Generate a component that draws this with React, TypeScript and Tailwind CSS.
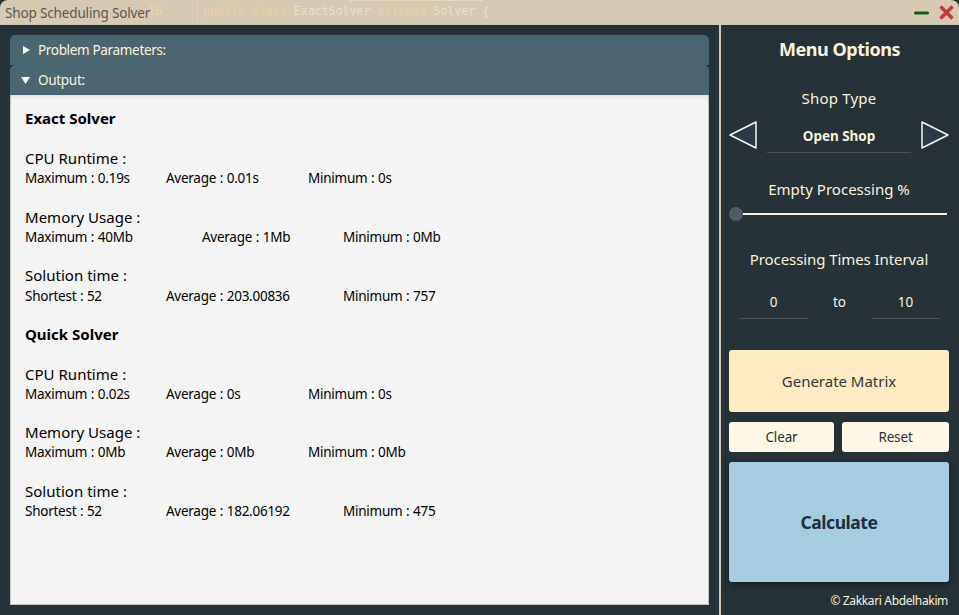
const data = [
  {
    name: 'Exact Solver',
    groups: [
      { title: 'CPU Runtime :', cells: ['Maximum : 0.19s', 'Average : 0.01s', 'Minimum : 0s'], cols: 'grid-cols-[141px_142px_1fr]', h: 'h-[59px]', gap: '' },
      { title: 'Memory Usage :', cells: ['Maximum : 40Mb', 'Average : 1Mb', 'Minimum : 0Mb'], cols: 'grid-cols-[177px_141px_1fr]', h: 'h-[58px]', gap: '' },
      { title: 'Solution time :', cells: ['Shortest : 52', 'Average : 203.00836', 'Minimum : 757'], cols: 'grid-cols-[141px_177px_1fr]', h: 'h-[59px]', gap: 'pt-px' },
    ],
  },
  {
    name: 'Quick Solver',
    groups: [
      { title: 'CPU Runtime :', cells: ['Maximum : 0.02s', 'Average : 0s', 'Minimum : 0s'], cols: 'grid-cols-[141px_142px_1fr]', h: 'h-[58px]', gap: '' },
      { title: 'Memory Usage :', cells: ['Maximum : 0Mb', 'Average : 0Mb', 'Minimum : 0Mb'], cols: 'grid-cols-[141px_142px_1fr]', h: 'h-[59px]', gap: '' },
      { title: 'Solution time :', cells: ['Shortest : 52', 'Average : 182.06192', 'Minimum : 475'], cols: 'grid-cols-[141px_177px_1fr]', h: 'h-[59px]', gap: '' },
    ],
  },
];

function TitleBar() {
  return (
    <header className="relative flex h-[25px] shrink-0 items-center justify-between rounded-t-[8px] bg-[#d6cbb2] pl-[5px] pr-[4px] shadow-[inset_0_-1px_0_#cbcab9]">
      <span className="relative z-10 pt-px text-[13.5px] leading-[25px] tracking-[-0.15px] text-[#5c594d]">Shop Scheduling Solver</span>
      <div className="absolute left-[148px] top-0 h-[24px] whitespace-pre font-['DejaVu_Sans_Mono',monospace] text-[11.6px] leading-[23px] text-[#ead6b2]">16</div>
      <div className="absolute left-[197px] top-0 h-[24px] w-px bg-[#dcd2ba]" />
      <div className="absolute left-[349px] top-0 h-px w-[134px] bg-[#e5dac0]" />
      <div className="absolute left-[203px] top-0 h-[24px] whitespace-pre font-['DejaVu_Sans_Mono',monospace] text-[11.6px] leading-[23px] text-[#e9d1ab]">
        public class <span className="text-[#e9e1c8]">ExactSolver</span> extends <span className="text-[#e9e1c8]">Solver {'{'}</span>
      </div>
      <div className="flex items-center gap-[9px]">
        <svg width="16" height="18" viewBox="0 0 16 18"><path d="M2.5 9h12" stroke="#0b5d10" strokeWidth="3" strokeLinecap="round" /></svg>
        <svg width="17" height="18" viewBox="0 0 17 18"><path d="M2.5 2.5l12 12M14.5 2.5l-12 12" stroke="#c13a3a" strokeWidth="3.6" /></svg>
      </div>
    </header>
  );
}

function Output() {
  return (
    <main className="flex w-[719px] flex-col p-[10px]">
      <div className="flex h-[30px] items-center rounded-t-[5px] bg-[#4a6670] pl-[12px] text-[13.5px] text-[#fbf3dc]">
        <svg width="10" height="10" viewBox="0 0 10 10"><path d="M1 1l7 4-7 4z" fill="#fffbe6" /></svg>
        <span className="ml-[6px] tracking-[-0.33px]">Problem Parameters:</span>
      </div>
      <div className="bg-[#263138]">
        <div className="flex h-[30px] items-center rounded-t-[5px] bg-[#4a6670] pl-[11px] text-[13.5px] text-[#fbf3dc]">
          <svg width="10" height="10" viewBox="0 0 10 10"><path d="M0 2h9l-4.5 7z" fill="#fffbe6" /></svg>
          <span className="ml-[7px] tracking-[-0.3px]">Output:</span>
        </div>
      </div>
      <section className="flex-1 border border-t-0 border-[#c0c5c8] bg-[#f4f4f4] pl-[14px] pt-[13px] text-black shadow-[inset_0_4px_4px_-3px_rgba(0,0,0,0.12)]">
        {data.map((s) => (
          <div key={s.name} className="h-[216px]">
            <h2 className="mb-[20px] text-[15px] font-bold leading-[20px]">{s.name}</h2>
            {s.groups.map((g) => (
              <div key={g.title} className={g.h}>
                <h3 className="text-[15px] leading-[20px] tracking-[0.02px]">{g.title}</h3>
                <div className={`grid text-[13.5px] leading-[20px] tracking-[-0.26px] [word-spacing:0.4px] ${g.cols} ${g.gap}`}>
                  {g.cells.map((c) => <span key={c}>{c}</span>)}
                </div>
              </div>
            ))}
          </div>
        ))}
      </section>
    </main>
  );
}

function Arrow({ flip = false }: { flip?: boolean }) {
  return (
    <svg width="28" height="28" viewBox="0 0 28 28" className={flip ? '-scale-x-100' : ''}>
      <path d="M1 14L27 1v26z" fill="#2c3a47" stroke="#f6f6f4" strokeWidth="1.5" strokeLinejoin="round" />
    </svg>
  );
}

function Menu() {
  return (
    <aside className="flex w-[240px] flex-col border-l-2 border-[#d0c8b8] pl-[8px] pr-[10px] text-[#faf2dc]">
      <h1 className="mt-[12px] pl-px text-center text-[18px] font-bold leading-[24px] tracking-[-0.45px]">Menu Options</h1>
      <h2 className="mt-[27px] text-center text-[15px] leading-[20px] tracking-[0.2px]">Shop Type</h2>
      <div className="mt-[13px] flex h-[32px] justify-between">
        <Arrow />
        <div className="h-[32px] w-[144px] border-b border-[#4b5257] text-center text-[13.5px] font-bold leading-[30px] tracking-[-0.05px]">Open Shop</div>
        <Arrow flip />
      </div>
      <h2 className="mt-[26px] text-center text-[15px] leading-[20px] tracking-[0.02px]">Empty Processing %</h2>
      <div className="mt-[8px] flex h-[14px] items-center">
        <div className="size-[14px] rounded-full bg-[#505c63]" />
        <div className="mr-[2px] h-[2px] flex-1 bg-[#fbf1dc]" />
      </div>
      <h2 className="mt-[28px] text-center text-[15px] leading-[20px] tracking-[-0.08px]">Processing Times Interval</h2>
      <div className="mt-[20px] flex justify-between pl-[10px] pr-[9px] text-center text-[13.5px] leading-[26px]">
        <div className="h-[30px] w-[69px] border-b border-[#4b5257]">0</div>
        <div>to</div>
        <div className="h-[30px] w-[69px] border-b border-[#4b5257]">10</div>
      </div>
      <button className="mt-[31px] h-[62px] shrink-0 rounded-[3px] bg-[#ffebc3] text-[15px] tracking-[-0.02px] text-[#30383a]">Generate Matrix</button>
      <div className="mt-[10px] flex gap-[8px] text-[13.5px] tracking-[-0.15px] text-[#263138]">
        <button className="h-[30px] w-[105px] rounded-[3px] bg-[#fff8e7]">Clear</button>
        <button className="h-[30px] w-[107px] rounded-[3px] bg-[#fff8e7]">Reset</button>
      </div>
      <button className="mt-[10px] h-[120px] shrink-0 rounded-[3px] bg-[#a6cce0] text-[17.5px] font-bold tracking-[-0.45px] text-[#1d303b] shadow-[0_3px_7px_rgba(0,0,0,0.4)]">Calculate</button>
      <footer className="mt-[9px] pr-px text-right text-[12px] leading-[20px] tracking-[-0.35px]">© Zakkari Abdelhakim</footer>
    </aside>
  );
}

export default function App() {
  return (
    <div className="flex h-[615px] w-[959px] flex-col overflow-hidden bg-[#263138] font-['Noto_Sans','Open_Sans',sans-serif]">
      <TitleBar />
      <div className="flex flex-1">
        <Output />
        <Menu />
      </div>
    </div>
  );
}
